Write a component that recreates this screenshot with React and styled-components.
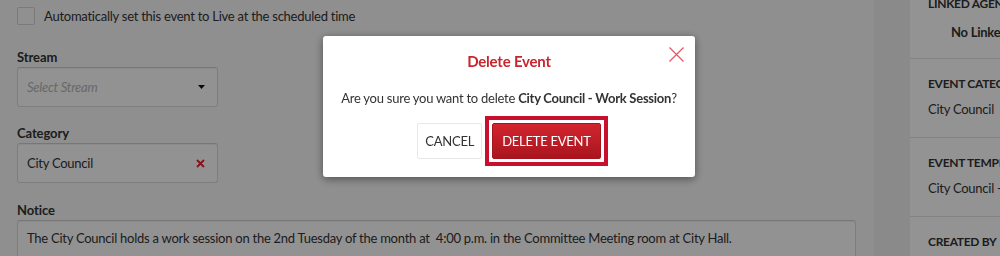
import React from "react";
import styled, { createGlobalStyle } from "styled-components";

const Global = createGlobalStyle`
  html, body { margin: 0; padding: 0; overflow: hidden; }
  body {
    font-family: Lato, "Open Sans", "Liberation Sans", sans-serif;
    color: #333;
    background: #eeeeee;
    font-size: 13px;
    letter-spacing: -0.25px;
  }
  * { box-sizing: border-box; }
`;

const Page = styled.div`
  display: flex;
  width: 100vw;
  height: 256px;
  overflow: hidden;
  background: #eeeeee;
`;

const Main = styled.div`
  flex: 0 0 874px;
  background: #f6f6f6;
  padding: 7px 18px 0 17px;
`;

const CheckRow = styled.label`
  display: flex;
  align-items: center;
  gap: 9px;
  height: 18px;
  line-height: 20px;
  font-size: 13px;
  color: #333;
`;

const Box = styled.span`
  flex: 0 0 18px;
  width: 18px;
  height: 18px;
  border: 1px solid #d2d2d2;
  border-radius: 2px;
  background: #f8f8f8;
`;

const Group = styled.div`
  margin-top: ${(p) => p.$mt}px;
`;

const Label = styled.div`
  font-weight: 700;
  font-size: 13px;
  letter-spacing: -0.1px;
  line-height: 20px;
  color: #333;
`;

const Field = styled.div`
  display: flex;
  justify-content: space-between;
  width: ${(p) => (p.$wide ? "100%" : "201px")};
  height: ${(p) => (p.$wide ? "60px" : "40px")};
  align-items: ${(p) => (p.$wide ? "flex-start" : "center")};
  padding: ${(p) => (p.$wide ? "7px 9px" : "0 12px 0 9px")};
  border: 1px solid #dadada;
  border-top-color: #cdcdcd;
  border-radius: 3px;
  background: #fcfcfc;
  box-shadow: inset 0 1px 1px rgba(0, 0, 0, 0.06);
  font-size: 13px;
  line-height: 20px;
  color: #333;
`;

const Placeholder = styled.span`
  font-style: italic;
  color: #b4b4b4;
`;

const Gap = styled.div`
  flex: 0 0 36px;
  background: #eeeeee;
`;

const Side = styled.div`
  flex: 0 0 200px;
  background: #fdfdfd;
  margin-top: -21px;
  align-self: flex-start;
`;

const Section = styled.div`
  padding: 17px 18px ${(p) => p.$pb}px;
  border-bottom: 1px solid #e2e2e2;
`;

const SideLabel = styled.div`
  font-size: 12px;
  line-height: 16px;
  font-weight: 700;
  letter-spacing: -0.3px;
  text-transform: uppercase;
  color: #333;
  white-space: nowrap;
`;

const SideValue = styled.div`
  margin-top: ${(p) => p.$mt}px;
  padding-left: ${(p) => p.$indent || 0}px;
  font-size: 13px;
  line-height: 20px;
  font-weight: ${(p) => (p.$bold ? 700 : 400)};
  white-space: nowrap;
  color: #333;
`;

const Overlay = styled.div`
  position: fixed;
  inset: 0;
  background: rgba(0, 0, 0, 0.42);
  display: flex;
  justify-content: center;
  align-items: flex-start;
  padding: 36px 0 0 18px;
`;

const Modal = styled.div`
  position: relative;
  width: 372px;
  background: #fff;
  border-radius: 3px;
  box-shadow: 0 2px 8px rgba(0, 0, 0, 0.45);
  padding: 15px 10px 18px;
  text-align: center;
`;

const Title = styled.div`
  font-size: 15px;
  line-height: 20px;
  font-weight: 700;
  letter-spacing: -0.2px;
  color: #c8262f;
`;

const Close = styled.button`
  position: absolute;
  top: 11px;
  right: 11px;
  width: 15px;
  height: 15px;
  padding: 0;
  border: 0;
  background: none;
  display: block;
`;

const Message = styled.p`
  margin: 17px 0 0;
  font-size: 13px;
  line-height: 20px;
  color: #333;
  white-space: nowrap;
`;

const Buttons = styled.div`
  margin-top: 15px;
  display: flex;
  justify-content: center;
  align-items: center;
  gap: 10px;
`;

const Highlight = styled.span`
  display: inline-flex;
  margin: -7px;
  padding: 3px;
  border: 4px solid #c8102e;
`;

const Btn = styled.button`
  height: 36px;
  padding: 0 ${(p) => (p.$danger ? 9 : 7)}px;
  font-family: inherit;
  font-size: 13px;
  letter-spacing: -0.25px;
  text-transform: uppercase;
  border-radius: 2px;
  border: 1px solid ${(p) => (p.$danger ? "#a8141e" : "#e8e8e8")};
  color: ${(p) => (p.$danger ? "#fff" : "#333")};
  background: ${(p) =>
    p.$danger ? "linear-gradient(#d2252f, #a9151f)" : "#fff"};
  outline: none;
`;

export default function App() {
  return (
    <>
      <Global />
      <Page>
        <Main>
          <CheckRow>
            <Box />
            Automatically set this event to Live at the scheduled time
          </CheckRow>
          <Group $mt={22}>
            <Label>Stream</Label>
            <Field>
              <Placeholder>Select Stream</Placeholder>
              <svg width="7" height="4" viewBox="0 0 7 4">
                <path d="M0 0h7L3.5 4z" fill="#111" />
              </svg>
            </Field>
          </Group>
          <Group $mt={16}>
            <Label>Category</Label>
            <Field>
              <span>City Council</span>
              <svg width="9" height="9" viewBox="0 0 9 9">
                <path d="M1 1l7 7M8 1L1 8" stroke="#e3202e" strokeWidth="1.8" />
              </svg>
            </Field>
          </Group>
          <Group $mt={17}>
            <Label>Notice</Label>
            <Field $wide>
              The City Council holds a work session on the 2nd Tuesday of the
              month at&nbsp; 4:00 p.m. in the Committee Meeting room at City Hall.
            </Field>
          </Group>
        </Main>
        <Gap />
        <Side>
          <Section $pb={16}>
            <SideLabel>Linked Agenda</SideLabel>
            <SideValue $mt={10} $bold $indent={23}>
              No Linked Agenda
            </SideValue>
          </Section>
          <Section $pb={18}>
            <SideLabel>Event Category</SideLabel>
            <SideValue $mt={7}>City Council</SideValue>
          </Section>
          <Section $pb={18}>
            <SideLabel>Event Template</SideLabel>
            <SideValue $mt={7}>City Council - Work Session</SideValue>
          </Section>
          <Section $pb={18}>
            <SideLabel>Created By</SideLabel>
          </Section>
        </Side>
      </Page>
      <Overlay>
        <Modal>
          <Title>Delete Event</Title>
          <Close aria-label="Close">
            <svg width="15" height="15" viewBox="0 0 15 15">
              <path
                d="M0.5 0.5l14 14M14.5 0.5l-14 14"
                stroke="#de5b67"
                strokeWidth="1.3"
              />
            </svg>
          </Close>
          <Message>
            Are you sure you want to delete <b>City Council - Work Session</b>?
          </Message>
          <Buttons>
            <Btn>Cancel</Btn>
            <Highlight>
              <Btn $danger>Delete Event</Btn>
            </Highlight>
          </Buttons>
        </Modal>
      </Overlay>
    </>
  );
}
